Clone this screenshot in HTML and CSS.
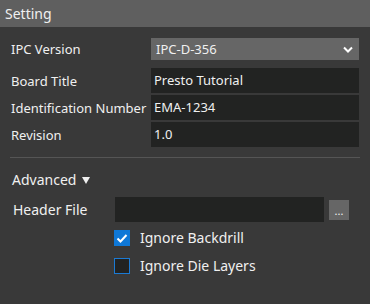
FILE: index.html
```html
<!DOCTYPE html>
<html lang="en">
<head>
    <meta charset="UTF-8">
    <title>Setting</title>
    <link rel="stylesheet" href="styles.css">
</head>
<body>
    <div class="title">Setting</div>

    <div class="form">
        <div class="row row-select">
            <span class="label">IPC Version</span>
            <div class="select">
                <span>IPC-D-356</span>
                <svg class="chevron" width="10" height="7" viewBox="0 0 10 7">
                    <path d="M1 1.5 L5 5.5 L9 1.5" fill="none" stroke="#fff" stroke-width="2"/>
                </svg>
            </div>
        </div>
        <div class="row">
            <span class="label">Board Title</span>
            <div class="input">Presto Tutorial</div>
        </div>
        <div class="row">
            <span class="label">Identification Number</span>
            <div class="input">EMA-1234</div>
        </div>
        <div class="row">
            <span class="label">Revision</span>
            <div class="input">1.0</div>
        </div>
    </div>

    <hr class="sep">

    <div class="advanced">
        <div class="adv-title">Advanced <span class="tri"></span></div>
        <div class="file-row">
            <span class="label">Header File</span>
            <div class="input file-input"></div>
            <div class="browse">...</div>
        </div>
        <div class="check-row">
            <span class="box checked">
                <svg width="16" height="16" viewBox="0 0 16 16">
                    <path d="M3.5 8.5 L6.5 11.5 L12.5 5" fill="none" stroke="#fff" stroke-width="2"/>
                </svg>
            </span>
            <span>Ignore Backdrill</span>
        </div>
        <div class="check-row">
            <span class="box"></span>
            <span>Ignore Die Layers</span>
        </div>
    </div>
</body>
</html>
```

FILE: styles.css
```css
body {
    margin: 0;
    background: #393939;
    color: #f0f0f0;
    font-family: "Noto Sans", sans-serif;
    font-size: 13px;
}
.title {
    height: 27px;
    line-height: 27px;
    padding-left: 5px;
    background: #5f5f5f;
    font-size: 14px;
}
.form {
    padding: 11px 11px 0 11px;
}
.row {
    display: grid;
    grid-template-columns: 140px 208px;
    align-items: center;
    margin-bottom: 2px;
}
.row-select {
    margin-bottom: 8px;
}
.select {
    height: 22px;
    background: #666666;
    display: flex;
    align-items: center;
    justify-content: space-between;
    padding: 0 6px 0 5px;
}
.input {
    height: 25px;
    line-height: 25px;
    background: #222322;
    padding-left: 3px;
}
.sep {
    margin: 10px 10px 0 10px;
    border: none;
    border-top: 1px solid #555555;
}
.advanced {
    padding: 12px 0 0 12px;
}
.adv-title {
    font-size: 14px;
    height: 19px;
    line-height: 19px;
}
.tri {
    display: inline-block;
    width: 0;
    height: 0;
    border-left: 4.5px solid transparent;
    border-right: 4.5px solid transparent;
    border-top: 7px solid #f0f0f0;
    margin-left: 2px;
    vertical-align: 1px;
}
.file-row {
    display: flex;
    align-items: center;
    margin-top: 8px;
}
.file-row .label {
    width: 102px;
    padding-left: 1px;
    font-size: 14px;
}
.file-input {
    width: 209px;
    padding: 0;
}
.browse {
    width: 20px;
    height: 20px;
    margin-left: 5px;
    background: #666666;
    text-align: center;
    line-height: 22px;
    font-size: 11px;
}
.check-row {
    display: flex;
    align-items: center;
    gap: 10px;
    height: 19px;
    margin: 6px 0 0 102px;
    font-size: 14px;
}
.check-row + .check-row {
    margin-top: 9px;
}
.box {
    width: 14px;
    height: 14px;
    border: 1px solid #1b7ad3;
    background: #222322;
}
.box.checked {
    width: 16px;
    height: 16px;
    border: none;
    background: #0f78d7;
}
.box svg {
    display: block;
}
```
